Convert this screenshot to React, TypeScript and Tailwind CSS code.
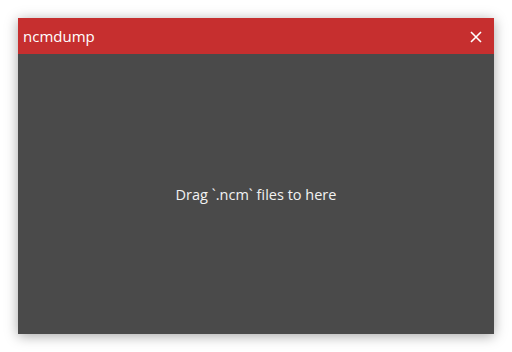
import React from "react";

export default function App() {
  return (
    <div className="w-[512px] h-[352px] bg-white p-[18px] flex" style={{ fontFamily: '"Open Sans", "Noto Sans", sans-serif' }}>
      <div className="flex-1 flex flex-col shadow-[0_2px_12px_rgba(0,0,0,0.35)]">
        <div className="h-[36px] bg-[#c62f2f] flex items-center justify-between pl-[5px] pr-[12px] pt-[1px]">
          <span className="text-white text-[15px] leading-none">ncmdump</span>
          <svg width="12" height="12" viewBox="0 0 12 12">
            <path d="M1 1 L11 11 M11 1 L1 11" stroke="#fff" strokeWidth="1.6" fill="none" />
          </svg>
        </div>
        <div className="flex-1 bg-[#4a4a4a] flex items-center justify-center pt-[2px]">
          <span className="text-[#f2f2f2] text-[14.5px]">Drag `.ncm` files to here</span>
        </div>
      </div>
    </div>
  );
}
